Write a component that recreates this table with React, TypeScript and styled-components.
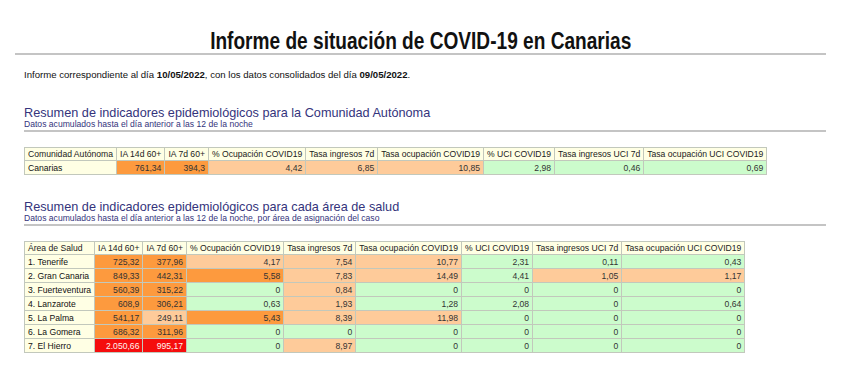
import React from 'react';
import styled, { createGlobalStyle } from 'styled-components';

const GlobalStyle = createGlobalStyle`
    body {
        margin: 0;
        background: #ffffff;
        font-family: 'Liberation Sans', Arial, sans-serif;
        color: #222222;
    }
`;

const Page = styled.div`
    padding: 29px 17px 0 15px;
`;

const Title = styled.h1`
    margin: 0;
    font-size: 23px;
    line-height: 24px;
    font-weight: bold;
    text-align: center;
    color: #111111;
    border-bottom: 2px solid #c4c4c4;
`;

const TitleText = styled.span`
    display: inline-block;
    transform: scaleX(0.83);
`;

const Body = styled.div`
    padding-left: 9px;
`;

const Intro = styled.p`
    margin: 14px 0 0 0;
    font-size: 9.6px;
    line-height: 12px;
    color: #111111;
`;

const Section = styled.section<{ gap: number }>`
    margin-top: ${props => props.gap}px;
`;

const SectionHead = styled.div`
    border-bottom: 2px solid #c4c4c4;
    padding-bottom: 1px;
`;

const Heading = styled.h2`
    margin: 0;
    font-size: 12.7px;
    line-height: 13px;
    font-weight: normal;
    color: #34347c;
`;

const Sub = styled.div`
    font-size: 8.6px;
    line-height: 9px;
    color: #34347c;
`;

const Table = styled.table`
    margin-top: 15px;
    border-collapse: collapse;
    border: 1px solid #c2c8bc;
    font-size: 8.6px;
`;

const Th = styled.th`
    background: #ffffe4;
    border: 1px solid #c2c8bc;
    font-weight: normal;
    text-align: left;
    padding: 0 3px;
    height: 12px;
    line-height: 12px;
    white-space: nowrap;
    color: #222222;
`;

const NameCell = styled.td`
    background: #ffffe4;
    border: 1px solid #c2c8bc;
    padding: 0 3px;
    height: 13px;
    line-height: 12px;
    white-space: nowrap;
    color: #111111;
`;

type Level = 'd' | 'l' | 'g' | 'r';

const levelBg: Record<Level, string> = {
    d: '#fd9a3e',
    l: '#fecb9a',
    g: '#ccfccc',
    r: '#f50d0d',
};

const Cell = styled.td<{ level: Level }>`
    background: ${props => levelBg[props.level]};
    color: ${props => (props.level === 'r') ? '#fff4f0' : '#333333'};
    border: 1px solid #c2c8bc;
    padding: 0 3px;
    height: 13px;
    line-height: 12px;
    text-align: right;
    white-space: nowrap;
`;

const headers = [
    'IA 14d 60+',
    'IA 7d 60+',
    '% Ocupación COVID19',
    'Tasa ingresos 7d',
    'Tasa ocupación COVID19',
    '% UCI COVID19',
    'Tasa ingresos UCI 7d',
    'Tasa ocupación UCI COVID19',
];

type Row = { name: string, cells: [string, Level][] };

const community: Row[] = [
    { name: 'Canarias', cells: [['761,34', 'd'], ['394,3', 'd'], ['4,42', 'l'], ['6,85', 'l'], ['10,85', 'l'], ['2,98', 'g'], ['0,46', 'g'], ['0,69', 'g']] },
];

const areas: Row[] = [
    { name: '1. Tenerife', cells: [['725,32', 'd'], ['377,96', 'd'], ['4,17', 'l'], ['7,54', 'l'], ['10,77', 'l'], ['2,31', 'g'], ['0,11', 'g'], ['0,43', 'g']] },
    { name: '2. Gran Canaria', cells: [['849,33', 'd'], ['442,31', 'd'], ['5,58', 'd'], ['7,83', 'l'], ['14,49', 'l'], ['4,41', 'g'], ['1,05', 'l'], ['1,17', 'l']] },
    { name: '3. Fuerteventura', cells: [['560,39', 'd'], ['315,22', 'd'], ['0', 'g'], ['0,84', 'l'], ['0', 'g'], ['0', 'g'], ['0', 'g'], ['0', 'g']] },
    { name: '4. Lanzarote', cells: [['608,9', 'd'], ['306,21', 'd'], ['0,63', 'g'], ['1,93', 'l'], ['1,28', 'g'], ['2,08', 'g'], ['0', 'g'], ['0,64', 'g']] },
    { name: '5. La Palma', cells: [['541,17', 'd'], ['249,11', 'l'], ['5,43', 'd'], ['8,39', 'l'], ['11,98', 'l'], ['0', 'g'], ['0', 'g'], ['0', 'g']] },
    { name: '6. La Gomera', cells: [['686,32', 'd'], ['311,96', 'd'], ['0', 'g'], ['0', 'g'], ['0', 'g'], ['0', 'g'], ['0', 'g'], ['0', 'g']] },
    { name: '7. El Hierro', cells: [['2.050,66', 'r'], ['995,17', 'r'], ['0', 'g'], ['8,97', 'l'], ['0', 'g'], ['0', 'g'], ['0', 'g'], ['0', 'g']] },
];

function DataTable(props: { first: string, rows: Row[] }) {
    return (
        <Table>
            <thead>
                <tr>
                    <Th>{props.first}</Th>
                    {headers.map(h => <Th key={h}>{h}</Th>)}
                </tr>
            </thead>
            <tbody>
                {props.rows.map(row => (
                    <tr key={row.name}>
                        <NameCell>{row.name}</NameCell>
                        {row.cells.map(([value, level], i) => (
                            <Cell key={i} level={level}>{value}</Cell>
                        ))}
                    </tr>
                ))}
            </tbody>
        </Table>
    );
}

export default function App() {
    return (
        <Page>
            <GlobalStyle />
            <Title><TitleText>Informe de situación de COVID-19 en Canarias</TitleText></Title>
            <Body>
                <Intro>
                    Informe correspondiente al día <b>10/05/2022</b>, con los datos consolidados del día <b>09/05/2022</b>.
                </Intro>
                <Section gap={26}>
                    <SectionHead>
                        <Heading>Resumen de indicadores epidemiológicos para la Comunidad Autónoma</Heading>
                        <Sub>Datos acumulados hasta el día anterior a las 12 de la noche</Sub>
                    </SectionHead>
                    <DataTable first="Comunidad Autónoma" rows={community} />
                </Section>
                <Section gap={26}>
                    <SectionHead>
                        <Heading>Resumen de indicadores epidemiológicos para cada área de salud</Heading>
                        <Sub>Datos acumulados hasta el día anterior a las 12 de la noche, por área de asignación del caso</Sub>
                    </SectionHead>
                    <DataTable first="Área de Salud" rows={areas} />
                </Section>
            </Body>
        </Page>
    );
}
